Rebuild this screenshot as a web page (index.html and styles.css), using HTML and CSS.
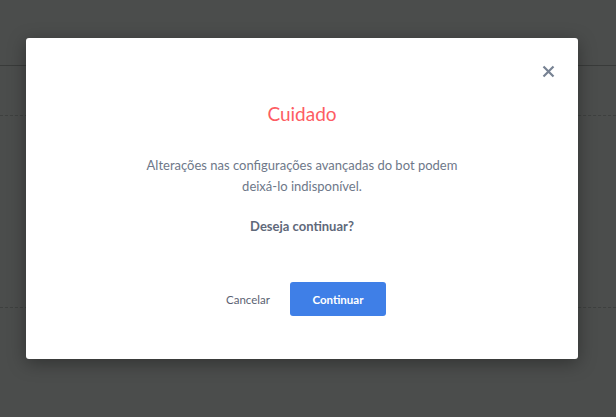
FILE: index.html
```html
<!DOCTYPE html>
<html lang="pt-BR">
<head>
<meta charset="utf-8">
<title>Cuidado</title>
<link rel="stylesheet" href="styles.css">
</head>
<body>
<div class="page">
  <header class="topbar"></header>
  <section class="section">
    <div class="section-body"></div>
  </section>
</div>
<div class="overlay">
  <div class="modal" role="dialog">
    <button class="close" aria-label="Fechar">
      <svg width="13" height="13" viewBox="0 0 13 13"><path d="M1.5 1.5 L11.5 11.5 M11.5 1.5 L1.5 11.5" stroke="#778293" stroke-width="2.2" stroke-linecap="butt"/></svg>
    </button>
    <h2 class="title">Cuidado</h2>
    <p class="text">Alterações nas configurações avançadas do bot podem<br>deixá-lo indisponível.</p>
    <p class="question">Deseja continuar?</p>
    <div class="actions">
      <button class="btn-cancel">Cancelar</button>
      <button class="btn-primary">Continuar</button>
    </div>
  </div>
</div>
</body>
</html>
```
FILE: styles.css
```css
html, body {
  margin: 0;
  padding: 0;
}
body {
  width: 616px;
  height: 417px;
  background: #4b4d4c;
  font-family: Lato, "Open Sans", sans-serif;
  overflow: hidden;
  position: relative;
}
.page {
  display: flex;
  flex-direction: column;
}
.topbar {
  height: 65px;
  border-bottom: 1px solid #393b3a;
}
.section {
  padding-top: 49px;
}
.section-body {
  height: 191px;
  border-top: 1px dashed #3e403f;
  border-bottom: 1px dashed #3e403f;
}
.overlay {
  position: absolute;
  inset: 0;
}
.modal {
  position: absolute;
  left: 26px;
  top: 38px;
  width: 552px;
  height: 321px;
  background: #fff;
  border-radius: 3px;
  box-shadow: 0 4px 18px rgba(0, 0, 0, 0.35);
  box-sizing: border-box;
  padding-top: 64px;
  display: flex;
  flex-direction: column;
  align-items: center;
}
.close {
  position: absolute;
  top: 27px;
  right: 23px;
  width: 13px;
  height: 13px;
  padding: 0;
  border: 0;
  background: none;
  display: flex;
}
.title {
  margin: 0;
  font-weight: 400;
  font-size: 19px;
  line-height: 24px;
  color: #fd5c63;
}
.text {
  margin: 29px 0 0;
  font-size: 13px;
  line-height: 21px;
  color: #6e7889;
  text-align: center;
}
.question {
  margin: 19px 0 0;
  font-size: 13px;
  line-height: 21px;
  font-weight: 700;
  color: #5f697a;
}
.actions {
  margin-top: 45px;
  margin-left: 8px;
  display: flex;
  align-items: center;
  gap: 20px;
}
.btn-cancel {
  border: 0;
  background: none;
  padding: 0;
  font-family: inherit;
  font-size: 11.5px;
  color: #5b6272;
}
.btn-primary {
  width: 96px;
  height: 34px;
  border: 0;
  border-radius: 3px;
  background: #3f7fe7;
  color: #fff;
  font-family: inherit;
  font-size: 11.5px;
  font-weight: 700;
}
```
